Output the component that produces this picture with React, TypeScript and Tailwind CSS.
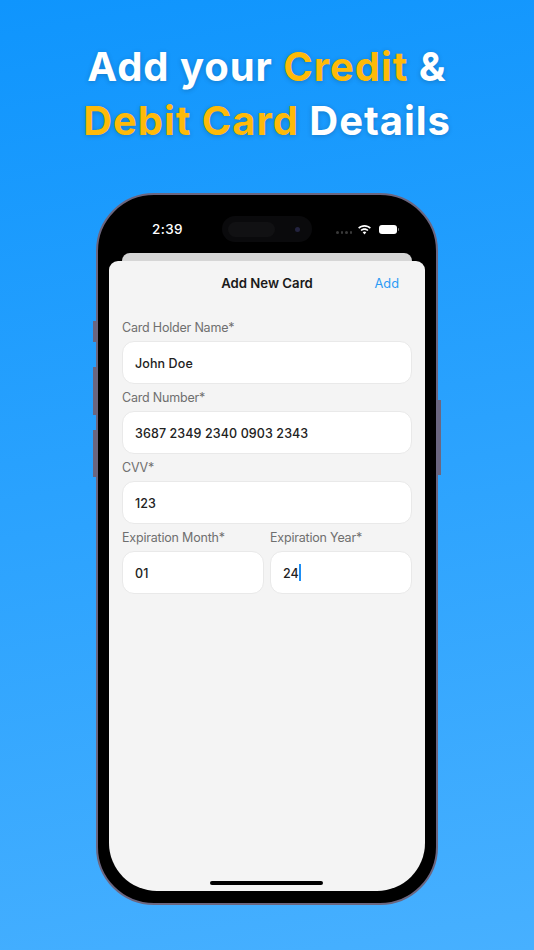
function Field({ label, value, caret, className }: { label: string; value: string; caret?: boolean; className?: string }) {
  return (
    <div className={className}>
      <div className="h-[27px] pt-[5px] text-[12.5px] leading-[18px] tracking-[-0.2px] text-[#6f6f6f]">{label}</div>
      <div className="flex h-[43px] items-center rounded-[12px] border border-[#e9e9e9] bg-white px-[12px] pt-[4px] text-[12.5px] font-medium tracking-[0.1px] text-[#222222]">
        <span>{value}</span>
        {caret && <span className="mt-[-4px] h-[17px] w-[2px] bg-[#1d8ff5]" />}
      </div>
    </div>
  );
}

export default function App() {
  return (
    <div className="flex h-[950px] w-[534px] flex-col items-center overflow-hidden bg-[linear-gradient(170deg,#0f95fd,#47b0ff)] font-['Inter',sans-serif]">
      <h1 className="mt-[40px] text-center font-['Inter',sans-serif] text-[40px] leading-[54px] font-bold tracking-[0.95px] text-white [text-shadow:0_1px_5px_rgba(0,0,0,0.2)]">
        Add your <span className="text-[#ffba08]">Credit</span> &amp;
        <br />
        <span className="text-[#ffba08]">Debit Card</span> Details
      </h1>

      {/* phone */}
      <div className="relative mt-[45px] h-[712px] w-[342px] rounded-[58px] border-2 border-[#6b6680] bg-black px-[11px] pb-[12px]">
        {/* side buttons */}
        <div className="absolute top-[126px] left-[-5px] h-[21px] w-[3px] bg-[#6b6680]" />
        <div className="absolute top-[172px] left-[-5px] h-[48px] w-[3px] bg-[#6b6680]" />
        <div className="absolute top-[235px] left-[-5px] h-[47px] w-[3px] bg-[#6b6680]" />
        <div className="absolute top-[205px] right-[-5px] h-[75px] w-[3px] bg-[#6b6680]" />

        {/* status bar */}
        <div className="relative flex h-[58px] items-center justify-between pt-[11px] pr-[26px] pl-[43px] text-white">
          <span className="text-[13.5px] font-medium tracking-[0.4px]">2:39</span>
          <div className="absolute top-[21px] left-[113px] flex h-[26px] w-[90px] items-center justify-between rounded-full bg-[#0a0a0c] pr-[12px] pl-[6px]">
            <div className="h-[15px] w-[47px] rounded-full bg-[#111113]" />
            <div className="h-[5px] w-[5px] rounded-full bg-[#23233f]" />
          </div>
          <div className="flex items-center">
            <div className="mt-[6px] flex gap-[2px]">
              <i className="h-[2.5px] w-[2.5px] rounded-full bg-[#3a3a3a]" />
              <i className="h-[2.5px] w-[2.5px] rounded-full bg-[#3a3a3a]" />
              <i className="h-[2.5px] w-[2.5px] rounded-full bg-[#3a3a3a]" />
              <i className="h-[2.5px] w-[2.5px] rounded-full bg-[#3a3a3a]" />
            </div>
            <svg className="ml-[6px]" width="13" height="10" viewBox="0 0 13 10" fill="white">
              <path d="M6.5 0C9 0 11.2 1 12.9 2.6L11.8 3.8C10.4 2.5 8.5 1.7 6.5 1.7S2.6 2.5 1.2 3.8L.1 2.6C1.8 1 4 0 6.5 0Z" />
              <path d="M6.5 3.3C8 3.3 9.4 3.9 10.5 4.9L9.3 6.1C8.6 5.4 7.6 5 6.5 5S4.4 5.4 3.7 6.1L2.5 4.9C3.6 3.9 5 3.3 6.5 3.3Z" />
              <path d="M6.5 6.6C7.2 6.6 7.8 6.9 8.3 7.3L6.5 9.6 4.7 7.3C5.2 6.9 5.8 6.6 6.5 6.6Z" />
            </svg>
            <div className="ml-[8px] h-[9px] w-[18px] rounded-[3px] bg-white" />
            <div className="ml-[1px] h-[3px] w-[1px] rounded-r-full bg-[#777777]" />
          </div>
        </div>

        {/* sheets */}
        <div className="mx-[13px] h-[8px] rounded-t-[8px] bg-[#d6d6d6]" />
        <div className="h-[630px] rounded-t-[9px] rounded-b-[48px] bg-[#f4f4f4]">
          <div className="relative flex h-[46px] items-center justify-center">
            <span className="text-[13.2px] font-semibold text-[#1a1a1a]">Add New Card</span>
            <span className="absolute top-[14px] right-[26px] text-[12.8px] leading-[17px] text-[#2b9bf4]">Add</span>
          </div>
          <div className="flex flex-col px-[13px] pt-[7px]">
            <Field label="Card Holder Name*" value="John Doe" />
            <Field label="Card Number*" value="3687 2349 2340 0903 2343" />
            <Field label="CVV*" value="123" />
            <div className="flex gap-[6px]">
              <Field className="flex-1" label="Expiration Month*" value="01" />
              <Field className="flex-1" label="Expiration Year*" value="24" caret />
            </div>
          </div>
        </div>

        {/* home indicator */}
        <div className="absolute bottom-[18px] left-[112px] h-[4px] w-[113px] rounded-full bg-black" />
      </div>
    </div>
  );
}
